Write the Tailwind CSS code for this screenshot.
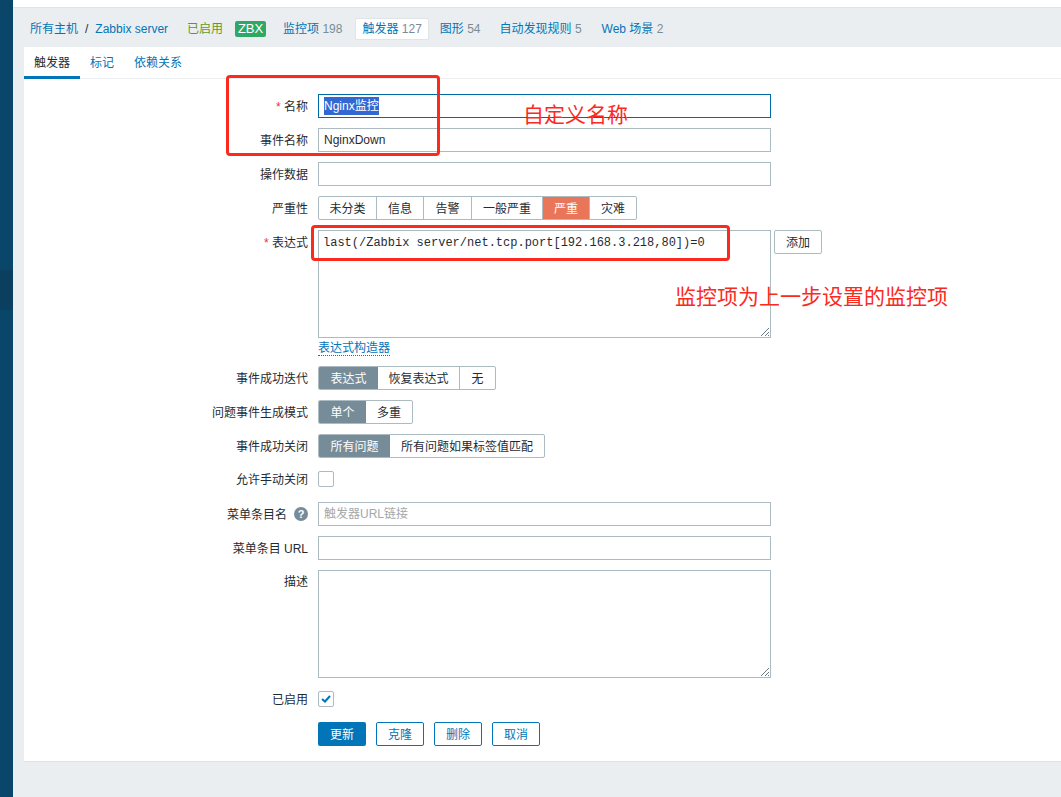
<!DOCTYPE html>
<html lang="zh-CN">
<head>
  <meta charset="UTF-8">
  <title>Zabbix 触发器</title>
  <script src="https://cdn.jsdelivr.net/npm/@tailwindcss/browser@4"></script>
</head>
<body class="relative h-[797px] w-[1061px] overflow-hidden bg-[#ebeef0] font-['Liberation_Sans','Noto_Sans_CJK_SC',sans-serif] text-[12px] text-[#1f2c33]">
  <div class="flex h-full">
    <!-- Sidebar -->
    <div class="flex w-[13px] shrink-0 flex-col bg-[#0a466a]">
      <div class="mt-[270px] h-[40px] bg-[#0a3f5f]"></div>
    </div>

    <div class="flex min-w-0 flex-1 flex-col">
      <div class="h-[8px] border-b border-[#dfe4e7] bg-white"></div>

      <!-- Host navigation -->
      <div class="flex h-[39px] items-center pl-[17px] pt-[2px] text-[12px]">
        <a class="text-[#0275b8]">所有主机</a>
        <span class="mx-[7px] text-[#1f2c33]">/</span>
        <a class="text-[#0275b8]">Zabbix server</a>
        <span class="ml-[19px] text-[#5f9a1f]">已启用</span>
        <span class="ml-[12px] h-[16px] w-[31px] rounded-[2px] bg-[#2fa866] text-center text-[13px] leading-[16px] text-white">ZBX</span>
        <a class="ml-[17px] text-[#0275b8]">监控项 <span class="text-[#768d99]">198</span></a>
        <a class="ml-[13px] rounded-[2px] border border-[#dfe4e7] bg-white px-[6px] leading-[20px] text-[#0275b8]">触发器 <span class="text-[#768d99]">127</span></a>
        <a class="ml-[11px] text-[#0275b8]">图形 <span class="text-[#768d99]">54</span></a>
        <a class="ml-[19px] text-[#0275b8]">自动发现规则 <span class="text-[#768d99]">5</span></a>
        <a class="ml-[20px] text-[#0275b8]">Web 场景 <span class="text-[#768d99]">2</span></a>
      </div>

      <!-- Card -->
      <div class="ml-[11px] h-[715px] border-b border-[#dfe4e7] bg-white">
        <div class="flex h-[32px] border-b border-[#ebeef0]">
          <a class="h-[32px] w-[56px] border-b-[3px] border-[#0275b8] pt-[8px] text-center leading-[16px] text-[#1f2c33]">触发器</a>
          <a class="ml-[10px] pt-[8px] leading-[16px] text-[#0275b8]">标记</a>
          <a class="ml-[20px] pt-[8px] leading-[16px] text-[#0275b8]">依赖关系</a>
        </div>

        <!-- Form -->
        <form class="flex flex-col gap-[10px] pt-[15px]">
          <div class="flex items-center gap-[10px]">
            <label class="w-[284px] pt-[2px] text-right"><span class="text-[#e33734]">*</span> 名称</label>
            <div class="flex h-[24px] w-[453px] items-center border border-[#0069a8] px-[5px]"><span class="bg-[#3367d1] text-white">Nginx监控</span></div>
          </div>
          <div class="flex items-center gap-[10px]">
            <label class="w-[284px] pt-[2px] text-right">事件名称</label>
            <div class="flex h-[24px] w-[453px] items-center border border-[#acbbc2] px-[5px]">NginxDown</div>
          </div>
          <div class="flex items-center gap-[10px]">
            <label class="w-[284px] pt-[2px] text-right">操作数据</label>
            <div class="h-[24px] w-[453px] border border-[#acbbc2]"></div>
          </div>
          <div class="flex items-center gap-[10px]">
            <label class="w-[284px] pt-[2px] text-right">严重性</label>
            <div class="flex h-[24px] overflow-hidden rounded-[2px] border border-[#acbbc2]">
              <span class="w-[58px] border-r border-[#acbbc2] text-center leading-[24px]">未分类</span>
              <span class="w-[47px] border-r border-[#acbbc2] text-center leading-[24px]">信息</span>
              <span class="w-[48px] border-r border-[#acbbc2] text-center leading-[24px]">告警</span>
              <span class="w-[71px] border-r border-[#acbbc2] text-center leading-[24px]">一般严重</span>
              <span class="w-[46px] bg-[#e97659] text-center leading-[24px] text-white">严重</span>
              <span class="w-[47px] border-l border-[#acbbc2] text-center leading-[24px]">灾难</span>
            </div>
          </div>
          <div>
            <div class="flex items-start gap-[10px]">
              <label class="w-[284px] pt-[4px] text-right"><span class="text-[#e33734]">*</span> 表达式</label>
              <div class="relative h-[108px] w-[453px] border border-[#acbbc2] pl-[4px] pt-[4px] font-['Liberation_Mono',monospace] leading-[16px]">
                last(/Zabbix server/net.tcp.port[192.168.3.218,80])=0
                <svg class="absolute bottom-0 right-0" width="10" height="10" viewBox="0 0 10 10"><path d="M1 9 9 1M5 9 9 5M8 9 9 8" stroke="#6b7a82" fill="none"/></svg>
              </div>
              <button type="button" class="ml-[-7px] h-[24px] w-[48px] rounded-[2px] border border-[#acbbc2] pt-[1px]">添加</button>
            </div>
            <div class="ml-[294px] mt-[1px] h-[17px]"><a class="inline-block h-[15px] border-b border-dotted border-[#0275b8] leading-[14px] text-[#0275b8]">表达式构造器</a></div>
          </div>
          <div class="flex items-center gap-[10px]">
            <label class="w-[284px] pt-[2px] text-right">事件成功迭代</label>
            <div class="flex h-[24px] overflow-hidden rounded-[2px] border border-[#acbbc2]">
              <span class="w-[59px] bg-[#768d99] text-center leading-[24px] text-white">表达式</span>
              <span class="w-[82px] border-r border-[#acbbc2] text-center leading-[24px]">恢复表达式</span>
              <span class="w-[35px] text-center leading-[24px]">无</span>
            </div>
          </div>
          <div class="flex items-center gap-[10px]">
            <label class="w-[284px] pt-[2px] text-right">问题事件生成模式</label>
            <div class="flex h-[24px] overflow-hidden rounded-[2px] border border-[#acbbc2]">
              <span class="w-[47px] bg-[#768d99] text-center leading-[24px] text-white">单个</span>
              <span class="w-[46px] text-center leading-[24px]">多重</span>
            </div>
          </div>
          <div class="flex items-center gap-[10px]">
            <label class="w-[284px] pt-[2px] text-right">事件成功关闭</label>
            <div class="flex h-[24px] overflow-hidden rounded-[2px] border border-[#acbbc2]">
              <span class="w-[71px] bg-[#768d99] text-center leading-[24px] text-white">所有问题</span>
              <span class="w-[154px] text-center leading-[24px]">所有问题如果标签值匹配</span>
            </div>
          </div>
          <div class="flex h-[22px] items-center gap-[10px]">
            <label class="w-[284px] pt-[2px] text-right">允许手动关闭</label>
            <div class="h-[16px] w-[16px] rounded-[2px] border border-[#acbbc2]"></div>
          </div>
          <div class="mt-[2px] flex items-center gap-[10px]">
            <label class="flex w-[284px] items-center justify-end gap-[7px]"><span class="pt-[2px]">菜单条目名</span>
              <span class="flex h-[14px] w-[14px] items-center justify-center rounded-full bg-[#768d99] text-[11px] font-bold text-white">?</span>
            </label>
            <div class="flex h-[24px] w-[453px] items-center border border-[#acbbc2] px-[5px] text-[#a3a8ab]">触发器URL链接</div>
          </div>
          <div class="flex items-center gap-[10px]">
            <label class="w-[284px] pt-[2px] text-right">菜单条目 URL</label>
            <div class="h-[24px] w-[453px] border border-[#acbbc2]"></div>
          </div>
          <div class="flex items-start gap-[10px]">
            <label class="w-[284px] pt-[3px] text-right">描述</label>
            <div class="relative h-[108px] w-[453px] border border-[#acbbc2]">
              <svg class="absolute bottom-0 right-0" width="10" height="10" viewBox="0 0 10 10"><path d="M1 9 9 1M5 9 9 5M8 9 9 8" stroke="#6b7a82" fill="none"/></svg>
            </div>
          </div>
          <div class="flex h-[22px] items-center gap-[10px]">
            <label class="w-[284px] pt-[2px] text-right">已启用</label>
            <div class="flex h-[16px] w-[16px] items-center justify-center rounded-[2px] border border-[#acbbc2]">
              <svg width="10" height="8" viewBox="0 0 10 8"><path d="M1 4 4 6.5 9 1" stroke="#0275b8" stroke-width="2" fill="none"/></svg>
            </div>
          </div>
          <div class="ml-[294px] mt-[2px] flex gap-[10px]">
            <button type="button" class="h-[24px] w-[48px] rounded-[2px] bg-[#0275b8] pt-[1px] text-white">更新</button>
            <button type="button" class="h-[24px] w-[48px] rounded-[2px] border border-[#0275b8] pt-[1px] text-[#0275b8]">克隆</button>
            <button type="button" class="h-[24px] w-[48px] rounded-[2px] border border-[#0275b8] pt-[1px] text-[#0275b8]">删除</button>
            <button type="button" class="h-[24px] w-[48px] rounded-[2px] border border-[#0275b8] pt-[1px] text-[#0275b8]">取消</button>
          </div>
        </form>
      </div>
    </div>
  </div>

  <!-- Red annotations drawn over the screenshot -->
  <div class="absolute left-[226px] top-[75px] h-[81px] w-[214px] rounded-[4px] border-[3px] border-[#fb2a1e]"></div>
  <div class="absolute left-[311px] top-[225px] h-[36px] w-[419px] rounded-[4px] border-[3px] border-[#fb2a1e]"></div>
  <div class="absolute left-[523px] top-[101px] text-[21px] leading-[28px] text-[#fb2a1e]">自定义名称</div>
  <div class="absolute left-[675px] top-[283px] text-[21px] leading-[28px] text-[#fb2a1e]">监控项为上一步设置的监控项</div>
</body>
</html>
